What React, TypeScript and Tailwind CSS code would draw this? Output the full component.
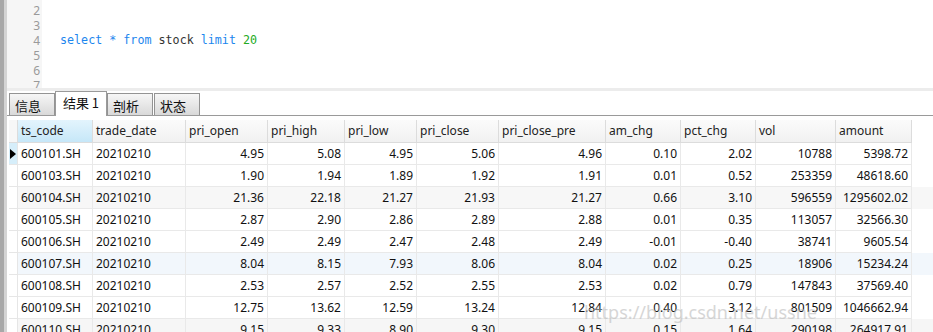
import React from "react";

const cols = [
  { name: "ts_code", w: "w-[75px]", align: "left" },
  { name: "trade_date", w: "w-[93px]", align: "left" },
  { name: "pri_open", w: "w-[82px]", align: "right" },
  { name: "pri_high", w: "w-[77px]", align: "right" },
  { name: "pri_low", w: "w-[72px]", align: "right" },
  { name: "pri_close", w: "w-[82px]", align: "right" },
  { name: "pri_close_pre", w: "w-[107px]", align: "right" },
  { name: "am_chg", w: "w-[75px]", align: "right" },
  { name: "pct_chg", w: "w-[75px]", align: "right" },
  { name: "vol", w: "w-[80px]", align: "right" },
  { name: "amount", w: "w-[76px]", align: "right" },
];

const rows: string[][] = [
  ["600101.SH", "20210210", "4.95", "5.08", "4.95", "5.06", "4.96", "0.10", "2.02", "10788", "5398.72"],
  ["600103.SH", "20210210", "1.90", "1.94", "1.89", "1.92", "1.91", "0.01", "0.52", "253359", "48618.60"],
  ["600104.SH", "20210210", "21.36", "22.18", "21.27", "21.93", "21.27", "0.66", "3.10", "596559", "1295602.02"],
  ["600105.SH", "20210210", "2.87", "2.90", "2.86", "2.89", "2.88", "0.01", "0.35", "113057", "32566.30"],
  ["600106.SH", "20210210", "2.49", "2.49", "2.47", "2.48", "2.49", "-0.01", "-0.40", "38741", "9605.54"],
  ["600107.SH", "20210210", "8.04", "8.15", "7.93", "8.06", "8.04", "0.02", "0.25", "18906", "15234.24"],
  ["600108.SH", "20210210", "2.53", "2.57", "2.52", "2.55", "2.53", "0.02", "0.79", "147843", "37569.40"],
  ["600109.SH", "20210210", "12.75", "13.62", "12.59", "13.24", "12.84", "0.40", "3.12", "801509", "1046662.94"],
  ["600110.SH", "20210210", "9.15", "9.33", "8.90", "9.30", "9.15", "0.15", "1.64", "290198", "264917.91"],
];

const rowBg = ["bg-white", "bg-white", "bg-[#f7f7f7]", "bg-white", "bg-white", "bg-[#f2f7fc]", "bg-white", "bg-white", "bg-[#f6f6f6]"];

function Tab({ label, active }: { label: string; active?: boolean }) {
  if (active) {
    return (
      <div className="h-[25px] w-[52px] -mb-px bg-white border border-b-0 border-[#9a9a9a] flex items-start justify-center pt-[1px] text-[13px] text-[#111] z-10" style={{ fontFamily: '"Noto Sans CJK SC", sans-serif' }}>
        结果 1
      </div>
    );
  }
  return (
    <div className="h-[22px] w-[46px] bg-gradient-to-b from-[#f6f6f6] to-[#d9d9d9] border border-b-0 border-[#939393] flex items-center pl-[5px] pt-[2px] text-[13px] text-[#111]" style={{ fontFamily: '"Noto Sans CJK SC", sans-serif' }}>
      {label}
    </div>
  );
}

export default function App() {
  const lines = [1, 2, 3, 4, 5, 6, 7];
  return (
    <div className="relative w-[933px] h-[332px] overflow-hidden bg-white flex">
      {/* left gray bar */}
      <div className="w-[4px] shrink-0 bg-[#a8a8a8]" />
      <div className="w-[3px] shrink-0 bg-[#d4d4d4]" />
      <div className="flex-1 flex flex-col min-w-0">
        {/* editor */}
        <div className="h-[88px] shrink-0 flex overflow-hidden bg-white">
          <div className="w-[35px] shrink-0 bg-[#f6f6f6] overflow-hidden">
            <div className="-mt-[12px]">
              {lines.map((n) => (
                <div key={n} className="h-[15px] leading-[15px] text-right pr-[2px] text-[12px] text-[#9a9a9a]" style={{ fontFamily: '"Noto Sans", sans-serif' }}>
                  {n}
                </div>
              ))}
            </div>
          </div>
          <div className="flex-1 overflow-hidden pl-[18px]">
            <div className="-mt-[12px]">
              {lines.map((n) => (
                <div key={n} className="h-[15px] leading-[15px] text-[11.7px] whitespace-pre" style={{ fontFamily: '"DejaVu Sans Mono", monospace' }}>
                  {n === 4 ? (
                    <>
                      <span className="text-[#1c86ee]">select * from</span>
                      <span className="text-[#333]"> stock </span>
                      <span className="text-[#1c86ee]">limit</span>
                      <span className="text-[#22aa22]"> 20</span>
                    </>
                  ) : (
                    " "
                  )}
                </div>
              ))}
            </div>
          </div>
        </div>
        {/* separator band */}
        <div className="h-[3px] shrink-0 bg-[#ececec]" />
        {/* tabs */}
        <div className="h-[25px] shrink-0 flex items-end pl-[2px] gap-0 border-b border-[#9a9a9a] bg-white">
          <Tab label="信息" />
          <Tab label="结果 1" active />
          <Tab label="剖析" />
          <div className="w-px" />
          <Tab label="状态" />
        </div>
        {/* table */}
        <div className="pt-[4px] pl-[2px] text-[12px] text-[#111]" style={{ fontFamily: '"Noto Sans", "Noto Sans CJK SC", sans-serif' }}>
          {/* header */}
          <div className="flex h-[23px]">
            <div className="w-[9px] shrink-0 border-r border-b border-[#dcdcdc] bg-[#f7f7f7]" />
            {cols.map((c, i) => (
              <div
                key={c.name}
                className={`${c.w} shrink-0 border-r border-b border-[#dcdcdc] leading-[22px] pl-[3px] text-[#222] ${i === 0 ? "bg-gradient-to-b from-[#e3f4fd] to-[#c6e7f8]" : "bg-gradient-to-b from-[#fbfbfb] to-[#f1f1f1]"}`}
              >
                {c.name}
              </div>
            ))}
          </div>
          {rows.map((r, ri) => (
            <div key={ri} className={`flex h-[22px] ${rowBg[ri]}`}>
              <div className={`w-[9px] shrink-0 border-r border-b border-[#e6e6e6] flex items-center ${ri === 0 ? "bg-[#d6eefa]" : "bg-white"}`}>
                {ri === 0 && (
                  <svg width="7" height="10" viewBox="0 0 7 10" className="ml-[1px]">
                    <polygon points="0,0 6,5 0,10" fill="#000" />
                  </svg>
                )}
              </div>
              {r.map((v, ci) => (
                <div
                  key={ci}
                  className={`${cols[ci].w} shrink-0 border-r border-b border-[#e9e9e9] leading-[21px] whitespace-nowrap ${cols[ci].align === "right" ? "text-right pr-[3px]" : "pl-[3px]"}`}
                >
                  {v}
                </div>
              ))}
            </div>
          ))}
        </div>
      </div>
      {/* watermark */}
      <div className="absolute left-[584px] top-[299px] text-[18px] text-[#bcbcbc] opacity-60 whitespace-nowrap pointer-events-none" style={{ fontFamily: '"Noto Sans", sans-serif' }}>
        https://blog.csdn.net/ussne
      </div>
    </div>
  );
}
